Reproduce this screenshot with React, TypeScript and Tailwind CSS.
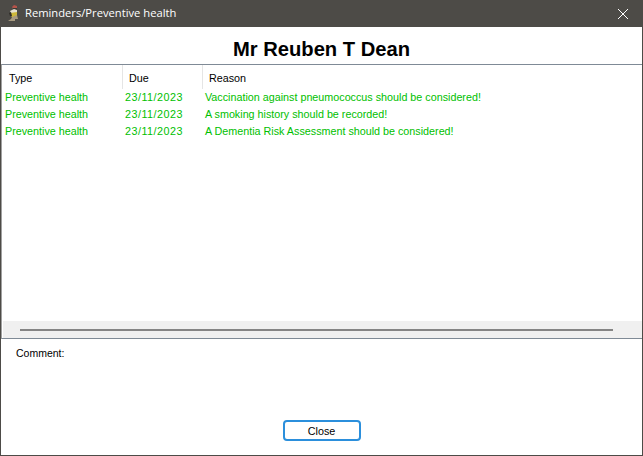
const rows = [
  'Vaccination against pneumococcus should be considered!',
  'A smoking history should be recorded!',
  'A Dementia Risk Assessment should be considered!',
]

const ui = "font-['Liberation_Sans',Arial,sans-serif]"

function Bird() {
  return (
    <svg width="12" height="17" viewBox="0 0 12 17" className="shrink-0">
      <path d="M5 2 L7 0 L10 1 L10 4 L7 5 Z" fill="#b5534a" />
      <path d="M6 3 L10 3 L10 6 L6 6 Z" fill="#3a3a34" />
      <path d="M3 6 L7 4 L10 5 L10 8 L4 8 Z" fill="#e4e0d0" />
      <path d="M3 8 L10 7 L10 11 L6 13 L3 10 Z" fill="#cdb83a" />
      <path d="M2 8 L4 7 L5 11 L3 11 Z" fill="#2f2c28" />
      <path d="M5 12 L10 10 L11 14 L8 14 L8 16 L5 16 L1 16 L4 14 Z" fill="#a89a80" />
    </svg>
  )
}

export default function App() {
  return (
    <div className={`${ui} w-[643px] h-[456px] flex flex-col bg-white overflow-hidden`}>
      <div className="h-[27px] shrink-0 bg-[#4d4b47] flex items-center pl-[7px] pr-[14px]">
        <Bird />
        <span className="ml-[6px] text-[11.2px] text-white font-['Open_Sans',sans-serif]">Reminders/Preventive health</span>
        <svg width="12" height="12" viewBox="0 0 12 12" className="ml-auto" fill="none" stroke="#fff" strokeWidth="1">
          <path d="M1 1 L11 11 M11 1 L1 11" />
        </svg>
      </div>
      <div className="flex-1 flex flex-col border-x border-b border-[#4d4b47] min-h-0">
        <div className="h-[37px] shrink-0 flex items-center justify-center text-[20.2px] font-bold text-black pt-[8px]">
          Mr Reuben T Dean
        </div>
        <div className="h-[275px] shrink-0 flex flex-col border-y border-l border-y-[#7f8a96] border-l-[#a0a0a0]">
          <div className="h-[24px] shrink-0 flex text-[10.75px] text-black">
            <div className="w-[121px] pl-[7px] pt-[5px] border-r border-[#e5e5e5]">Type</div>
            <div className="w-[80px] pl-[6px] pt-[5px] border-r border-[#e5e5e5]">Due</div>
            <div className="pl-[6px] pt-[5px]">Reason</div>
          </div>
          <div className="flex-1 flex flex-col text-[10.75px] text-[#00c000]">
            {rows.map((r) => (
              <div key={r} className="h-[17px] flex items-center">
                <div className="w-[120px] pl-[3px]">Preventive health</div>
                <div className="w-[80px] pl-[3px] tracking-[0.5px]">23/11/2023</div>
                <div className="pl-[3px]">{r}</div>
              </div>
            ))}
          </div>
          <div className="h-[17px] shrink-0 bg-[#f0f0f0] flex items-center pl-[17px] pr-[29px] ml-px">
            <div className="h-[2px] w-full bg-[#858585]" />
          </div>
        </div>
        <div className="flex-1 flex flex-col min-h-0">
          <div className="pl-[15px] pt-[7px] text-[10.5px] text-black">Comment:</div>
          <button className="mt-auto mb-[14px] self-center w-[78px] h-[21px] pt-px rounded-[4px] border-2 border-[#2b8fdc] text-[10.75px] text-black bg-white">
            Close
          </button>
        </div>
      </div>
    </div>
  )
}
